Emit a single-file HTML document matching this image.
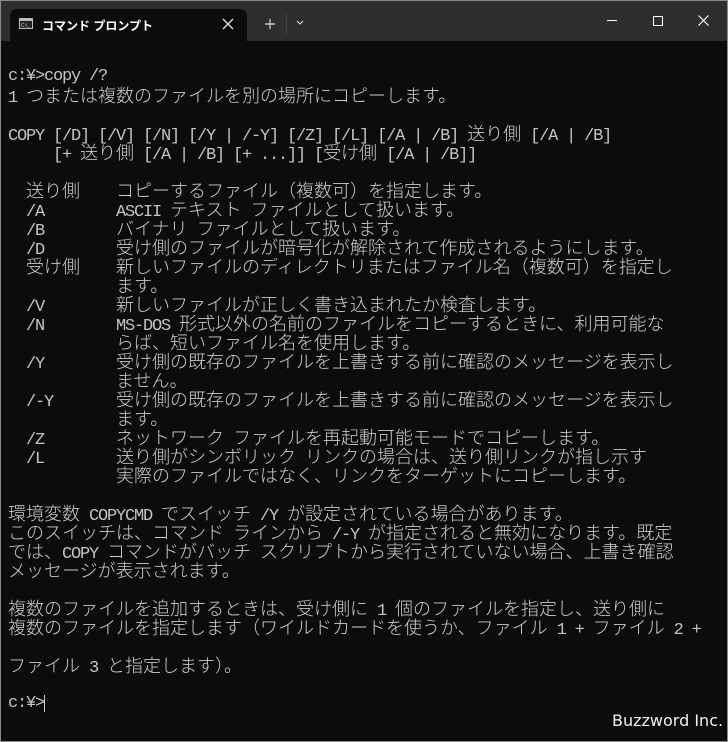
<!DOCTYPE html>
<html><head><meta charset="utf-8"><style>
html,body{margin:0;padding:0;}
body{width:728px;height:742px;background:#0c0c0c;position:relative;overflow:hidden;}
.frame{position:absolute;left:0;top:0;width:726px;height:740px;border:1px solid #8a8a8a;}
.bar{position:absolute;left:1px;top:1px;width:726px;height:40px;background:#2e2e2e;}
.tab{position:absolute;left:10px;top:9px;width:237px;height:32px;background:#0c0c0c;border-radius:7px 7px 0 0;}
.tt{position:absolute;left:42px;top:17px;color:#fff;font:bold 12px "Liberation Sans","Noto Sans CJK JP",sans-serif;}
.l{position:absolute;left:8px;height:19px;line-height:19px;white-space:pre;color:#c4c4c4;font-family:"Liberation Mono",monospace;font-size:17px;letter-spacing:-1.2px;}
i{font-style:normal;font-family:"Noto Sans CJK JP",sans-serif;font-size:18px;font-weight:300;letter-spacing:0;color:#cccccc;}
.wm{position:absolute;left:612px;top:711px;color:#f0f0f0;font:16px "DejaVu Sans","Liberation Sans",sans-serif;}
</style></head><body>
<div class="frame"></div>
<div class="bar"></div>
<div class="tab"></div>
<svg style="position:absolute;left:19px;top:18px" width="14" height="11"><rect x="0.5" y="0.5" width="13" height="10" fill="#222" stroke="#bbb"/><rect x="1" y="1" width="12" height="2" fill="#bbb"/><text x="2" y="9" font-size="5" fill="#ddd" font-family="Liberation Sans">C:\_</text></svg>
<div class="tt">コマンド プロンプト</div>
<svg style="position:absolute;left:222px;top:18px" width="12" height="12"><path d="M1 1L11 11M11 1L1 11" stroke="#ddd" stroke-width="1.3"/></svg>
<svg style="position:absolute;left:264px;top:18px" width="12" height="12"><path d="M6 1V11M1 6H11" stroke="#ddd" stroke-width="1.2"/></svg>
<div style="position:absolute;left:286px;top:14px;width:1px;height:20px;background:#444"></div>
<svg style="position:absolute;left:296px;top:20px" width="8" height="6"><path d="M1 1L4 4L7 1" stroke="#ddd" fill="none" stroke-width="1.1"/></svg>
<div style="position:absolute;left:607px;top:20px;width:10px;height:1px;background:#fff"></div>
<div style="position:absolute;left:653px;top:16px;width:8px;height:8px;border:1px solid #fff"></div>
<svg style="position:absolute;left:698px;top:15px" width="11" height="11"><path d="M0.5 0.5L10.5 10.5M10.5 0.5L0.5 10.5" stroke="#fff" stroke-width="1.1"/></svg>

<div class="l" style="top:67px">c:¥&gt;copy /?</div>
<div class="l" style="top:86px">1 <i>つまたは複数のファイルを別の場所にコピーします。</i></div>
<div class="l" style="top:124px">COPY [/D] [/V] [/N] [/Y | /-Y] [/Z] [/L] [/A | /B] <i>送り側</i> [/A | /B]</div>
<div class="l" style="top:143px">     [+ <i>送り側</i> [/A | /B] [+ ...]] [<i>受け側</i> [/A | /B]]</div>
<div class="l" style="top:181px">  <i>送り側</i>    <i>コピーするファイル（複数可）を指定します。</i></div>
<div class="l" style="top:200px">  /A        ASCII <i>テキスト</i> <i>ファイルとして扱います。</i></div>
<div class="l" style="top:219px">  /B        <i>バイナリ</i> <i>ファイルとして扱います。</i></div>
<div class="l" style="top:238px">  /D        <i>受け側のファイルが暗号化が解除されて作成されるようにします。</i></div>
<div class="l" style="top:257px">  <i>受け側</i>    <i>新しいファイルのディレクトリまたはファイル名（複数可）を指定し</i></div>
<div class="l" style="top:276px">            <i>ます。</i></div>
<div class="l" style="top:295px">  /V        <i>新しいファイルが正しく書き込まれたか検査します。</i></div>
<div class="l" style="top:314px">  /N        MS-DOS <i>形式以外の名前のファイルをコピーするときに、利用可能な</i></div>
<div class="l" style="top:333px">            <i>らば、短いファイル名を使用します。</i></div>
<div class="l" style="top:352px">  /Y        <i>受け側の既存のファイルを上書きする前に確認のメッセージを表示し</i></div>
<div class="l" style="top:371px">            <i>ません。</i></div>
<div class="l" style="top:390px">  /-Y       <i>受け側の既存のファイルを上書きする前に確認のメッセージを表示し</i></div>
<div class="l" style="top:409px">            <i>ます。</i></div>
<div class="l" style="top:428px">  /Z        <i>ネットワーク</i> <i>ファイルを再起動可能モードでコピーします。</i></div>
<div class="l" style="top:447px">  /L        <i>送り側がシンボリック</i> <i>リンクの場合は、送り側リンクが指し示す</i></div>
<div class="l" style="top:466px">            <i>実際のファイルではなく、リンクをターゲットにコピーします。</i></div>
<div class="l" style="top:504px"><i>環境変数</i> COPYCMD <i>でスイッチ</i> /Y <i>が設定されている場合があります。</i></div>
<div class="l" style="top:523px"><i>このスイッチは、コマンド</i> <i>ラインから</i> /-Y <i>が指定されると無効になります。既定</i></div>
<div class="l" style="top:542px"><i>では、</i>COPY <i>コマンドがバッチ</i> <i>スクリプトから実行されていない場合、上書き確認</i></div>
<div class="l" style="top:561px"><i>メッセージが表示されます。</i></div>
<div class="l" style="top:599px"><i>複数のファイルを追加するときは、受け側に</i> 1 <i>個のファイルを指定し、送り側に</i></div>
<div class="l" style="top:618px"><i>複数のファイルを指定します（ワイルドカードを使うか、ファイル</i> 1 + <i>ファイル</i> 2 +</div>
<div class="l" style="top:656px"><i>ファイル</i> 3 <i>と指定します）。</i></div>
<div class="l" style="top:694px">c:¥&gt;</div>
<div style="position:absolute;left:44px;top:695px;width:1px;height:17px;background:#ccc"></div>
<div class="wm">Buzzword Inc.</div>
</body></html>
